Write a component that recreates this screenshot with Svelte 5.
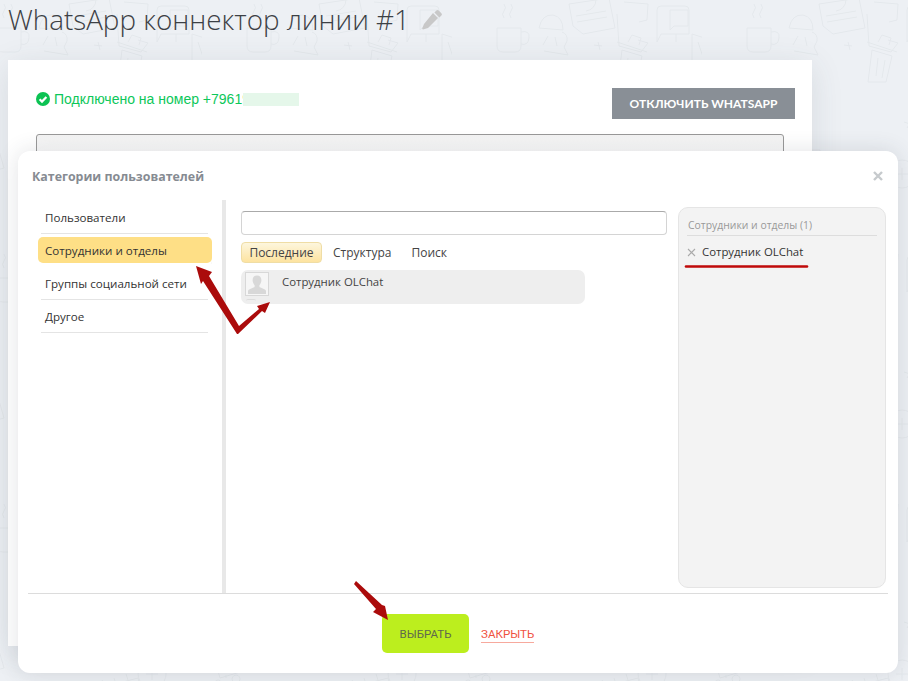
<script>
  const cats = ['Пользователи', 'Сотрудники и отделы', 'Группы социальной сети', 'Другое'];
  const tabs = ['Последние', 'Структура', 'Поиск'];
</script>

<svg class="wall" width="908" height="681" aria-hidden="true">
  <defs>
    <pattern id="doodle" width="250" height="250" patternUnits="userSpaceOnUse" x="-48" y="0">
      <g fill="none" stroke="#e4e8ec" stroke-width="1">
        <path d="M45 28h24v18q0 6-6 6H51q-6 0-6-6z M69 32q9-2 8 6t-8 6 M52 18q-3-4 0-7t0-7 M59 18q-3-4 0-7t0-7"/>
        <path d="M87 28q3-14 14-13 10 2 10 15z M96 36l-5 9 M103 37l2 9 M110 32q6 2 5 9l-3 6 4 8-24-4"/>
        <path d="M117 4l40-6 6 30-32 6-10-8z M122 -1a11 11 0 1 1 12 12 M124 16l30-5 M125 22l30-5"/>
        <path d="M165 14l2 32 22 6 7-9-10-3 M172 2l24 2-1 16-8 2"/>
        <path d="M205 10q0-4 4-4h24q4 0 4 4v24h-28l-4 8z M218 10h18v16h-14l-4 4z M224 34v8"/>
        <path d="M240 34l38 12-8 24-30-8z M246 42l6 18 M256 46l4 16"/>
        <path d="M165 42l30 10 M170 50l20 6-6 26h-18z M176 58l-2 18 M183 60l-3 18 M176 42l4-7 9 3-2 7"/>
        <path d="M146 42l2 8 M150 46l-8-1"/>
        <path d="M10 150l34-10 8 28-34 10z M18 155l4 14 M30 150l4 14 M16 180a4 4 0 1 0 .1 0 M34 175a4 4 0 1 0 .1 0 M24 178v-3"/>
        <path d="M70 115l-5 8 M62 118l9 2"/>
        <path d="M90 150h28v16q0 6-6 6H96q-6 0-6-6z M118 155q8-1 7 5t-7 5"/>
        <path d="M6 200l34-6 5 25-6 14H10z M14 188h10v8 M32 185h-8 M20 215a6 6 0 1 0 .1 0"/>
        <path d="M140 190l46-12 6 24-46 12z M150 180l3 6 M162 178l2 6 M174 174l2 6 M150 196l8-2 M164 192l8-2"/>
        <path d="M70 195l22-6 7 30-22 6z M75 210l12-3"/>
        <path d="M210 120l-5 8 M202 122l9 3"/>
        <path d="M200 160a14 14 0 1 0 .1 0 M200 168v12 M194 174h12"/>
      </g>
    </pattern>
  </defs>
  <rect width="908" height="681" fill="url(#doodle)" />
</svg>

<div class="page">
  <header class="top">
    <h1>WhatsApp коннектор линии #1</h1>
    <svg class="pencil" width="22" height="22" viewBox="0 0 22 22" aria-hidden="true">
      <path fill="#c8c8c8" d="M15.4 1.6a1.6 1.6 0 0 1 2.3 0l2.7 2.7a1.6 1.6 0 0 1 0 2.3l-2 2-5-5zM12 4 17 9 7 19l-5 1.6-.9-.9L3 15z"/>
    </svg>
  </header>

  <section class="card">
    <div class="status-row">
      <div class="status">
        <svg width="14" height="14" viewBox="0 0 14 14" aria-hidden="true">
          <circle cx="7" cy="7" r="7" fill="#0cc253"/>
          <path d="M3.6 7.2 6 9.6l4.400-4.600" fill="none" stroke="#fff" stroke-width="2.200"/>
        </svg>
        <span class="num">Подключено на номер +79619<span class="blur"></span></span>
      </div>
      <button class="off">ОТКЛЮЧИТЬ WHATSAPP</button>
    </div>
    <div class="box"></div>
  </section>
</div>

<div class="modal">
  <div class="modal-head">
    <h2>Категории пользователей</h2>
    <svg width="10" height="10" viewBox="0 0 10 10" aria-hidden="true">
      <path d="M1 1l8 8M9 1 1 9" stroke="#c6cacd" stroke-width="2.400"/>
    </svg>
  </div>

  <div class="modal-body">
    <nav class="side">
      {#each cats as c, i}
        <div class="cat" class:active={i === 1}>{c}</div>
      {/each}
    </nav>

    <div class="center">
      <div class="search"></div>
      <div class="tabs">
        {#each tabs as t, i}
          <span class="tab" class:on={i === 0}>{t}</span>
        {/each}
      </div>
      <div class="person">
        <div class="ava">
          <svg width="22" height="22" viewBox="0 0 22 22" aria-hidden="true">
            <path fill="#d8d8d8" d="M11 2.500c2.800 0 4.400 2 4.400 4.800 0 2-1 3.900-2 5v1.600l5 2.400c1 .5 1.600 1 1.600 2.200V21H2v-2.500c0-1.200.6-1.700 1.600-2.200l5-2.400v-1.600c-1-1.100-2-3-2-5C6.600 4.500 8.200 2.500 11 2.500z"/>
          </svg>
        </div>
        <span class="dots"></span>
        <span class="pname">Сотрудник OLChat</span>
      </div>
    </div>

    <aside class="picked">
      <div class="picked-head">Сотрудники и отделы (1)</div>
      <div class="picked-item">
        <svg width="9" height="9" viewBox="0 0 9 9" aria-hidden="true">
          <path d="M1 1l7 7M8 1 1 8" stroke="#aaa" stroke-width="1.100"/>
        </svg>
        <span>Сотрудник OLChat</span>
      </div>
    </aside>
  </div>

  <footer class="modal-foot">
    <button class="pick">ВЫБРАТЬ</button>
    <span class="close">ЗАКРЫТЬ</span>
  </footer>
</div>

<svg class="marks" width="908" height="681" aria-hidden="true">
  <g fill="#ab0b0b">
    <path d="M237 334 203 281l-2 3L196 266l16 6-3 4 30 50 20-17-2-3 13-4-5 11-3-2-24 23z"/>
    <path d="M354 584l2-3L382 605l3 1 3 14-15-8 3-3z"/>
  </g>
  <path d="M686 266.500H807" stroke="#c00a0a" stroke-width="2.600" stroke-linecap="round"/>
</svg>

<style>
  :global(body) {
    margin: 0;
    background: #edf0f4;
    overflow: hidden;
  }
  .wall, .marks {
    position: absolute;
    left: 0;
    top: 0;
  }
  .marks {
    pointer-events: none;
  }
  .page {
    position: relative;
    width: 908px;
    height: 681px;
    overflow: hidden;
  }
  .top {
    height: 60px;
    display: flex;
    align-items: flex-start;
    padding: 0 0 0 8px;
    box-sizing: border-box;
  }
  h1 {
    margin: 0;
    font: 300 27.8px/38px "Open Sans", sans-serif;
    color: #3c4045;
    white-space: nowrap;
  }
  .pencil {
    margin: 9px 0 0 11px;
  }
  .card {
    margin-left: 8px;
    width: 804px;
    height: 586px;
    background: #fff;
    box-sizing: border-box;
    padding: 28px 17px 0 28px;
    box-shadow: 0 6px 30px rgba(60, 70, 80, 0.12);
  }
  .status-row {
    display: flex;
    justify-content: space-between;
    align-items: flex-start;
  }
  .status {
    display: flex;
    align-items: center;
    gap: 4px;
    height: 22px;
  }
  .num {
    display: inline-flex;
    align-items: center;
    font: 14px "Liberation Sans", sans-serif;
    color: #0dc75a;
  }
  .blur {
    width: 56px;
    height: 13px;
    margin-left: -7px;
    background: #e5f7ea;
  }
  .off {
    width: 183px;
    height: 31px;
    background: #898f96;
    border: 0;
    padding: 0;
    color: #fff;
    font: 700 12px "Lato", sans-serif;
  }
  .box {
    margin: 15px 11px 0 0;
    height: 300px;
    border: 1px solid #999;
    border-radius: 3px;
    background: linear-gradient(#f3f3f3, #fff 30px);
  }
  .modal {
    position: absolute;
    left: 18px;
    top: 151px;
    width: 880px;
    height: 522px;
    background: #fff;
    border-radius: 12px;
    display: flex;
    flex-direction: column;
    box-shadow: 0 0 22px rgba(50, 60, 70, 0.14);
    font-family: "Open Sans", sans-serif;
  }
  .modal-head {
    height: 49px;
    display: flex;
    justify-content: space-between;
    align-items: center;
    padding: 0 15px 0 14px;
    flex: none;
  }
  h2 {
    margin: 2px 0 0;
    font: 700 12.4px "Open Sans", sans-serif;
    color: #868b92;
  }
  .modal-body {
    flex: 1;
    display: flex;
    margin: 0 10px;
    border-bottom: 1px solid #dcdcdc;
    min-height: 0;
  }
  .side {
    width: 198px;
    box-sizing: border-box;
    border-right: 4px solid #e8e8e8;
    padding: 1px 10px 0 10px;
    flex: none;
  }
  .cat {
    height: 33px;
    box-sizing: border-box;
    margin: 0 4px 0 3px;
    padding: 1px 0 0 4px;
    display: flex;
    align-items: center;
    font-size: 11.6px;
    color: #333;
    border-bottom: 1px solid #e4e4e4;
  }
  .cat.active {
    margin: 3px 0 4px;
    height: 26px;
    padding: 0 0 0 7px;
    border: 0;
    border-radius: 5px;
    background: #fedf86;
    box-shadow: 0 3px 0 #fff, 3px 4px 0 -3px #e4e4e4;
  }
  .center {
    width: 426px;
    margin-left: 15px;
    padding-top: 11px;
    flex: none;
  }
  .search {
    height: 24px;
    box-sizing: border-box;
    border: 1px solid #d4d4d4;
    border-top-color: #aaa;
    border-radius: 4px;
  }
  .tabs {
    display: flex;
    margin-top: 7px;
    gap: 11px;
    height: 21px;
  }
  .tab {
    font-size: 12px;
    line-height: 21px;
    color: #444;
    padding-right: 9px;
  }
  .tab.on {
    box-sizing: border-box;
    width: 81px;
    padding: 0;
    text-align: center;
    border: 1px solid #efdda5;
    border-radius: 4px;
    line-height: 19px;
    background: linear-gradient(#fdf6dd, #fde3a0);
  }
  .person {
    margin-top: 7px;
    width: 344px;
    height: 34px;
    background: #eee;
    border-radius: 7px;
    display: flex;
    align-items: flex-start;
    padding: 2px 0 0 4px;
    box-sizing: border-box;
    position: relative;
  }
  .ava {
    width: 24px;
    height: 24px;
    box-sizing: border-box;
    border: 1px solid #d8d8d8;
    background: #f6f6f6;
    display: flex;
  }
  .dots {
    position: absolute;
    left: 5px;
    top: 29px;
    width: 10px;
    height: 3px;
    border-top: 1px solid #dcdcdc;
    border-radius: 3px;
  }
  .pname {
    margin: 2px 0 0 13px;
    font-size: 11.4px;
    line-height: 16px;
    color: #444;
  }
  .picked {
    margin: 7px 0 5px 11px;
    width: 208px;
    box-sizing: border-box;
    background: #f3f3f3;
    border: 1px solid #e5e5e5;
    border-radius: 10px;
    padding: 8px 8px 0 8px;
    flex: none;
  }
  .picked-head {
    font-size: 10.4px;
    line-height: 18px;
    color: #999;
    padding: 0 0 1px 1px;
    border-bottom: 1px solid #ddd;
  }
  .picked-item {
    display: flex;
    align-items: center;
    gap: 6px;
    margin-top: 7px;
    font-size: 11.4px;
    line-height: 18px;
    color: #333;
  }
  .modal-foot {
    height: 79px;
    flex: none;
    display: flex;
    align-items: flex-start;
    padding: 20px 0 0 364px;
    box-sizing: border-box;
  }
  .pick {
    width: 87px;
    height: 39px;
    border: 0;
    padding: 0;
    border-radius: 5px;
    background: #bcee1e;
    color: #60694d;
    font: 400 11.5px "Roboto", sans-serif;
  }
  .close {
    margin: 13px 0 0 12px;
    font: 400 11.6px/14px "Roboto", sans-serif;
    color: #f0533f;
    border-bottom: 1px solid #f7a99d;
    padding-bottom: 1px;
  }
</style>
